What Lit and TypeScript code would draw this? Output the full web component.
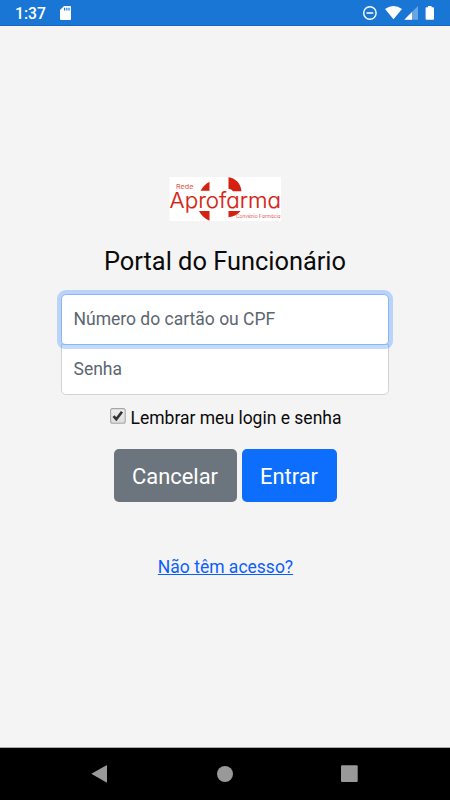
import { LitElement, html, css, svg } from "lit";
import { customElement } from "lit/decorators.js";

const logo = svg`
  <rect x=".5" width="111.500" height="44" fill="#fff"/>
  <g fill="#d5210f">
    <path d="M31.600 13.800Q34.500 8 40.500 4.700V13.800Z"/>
    <path d="M59.500 0.300C66.900 1.200 71.900 7 72.500 14.200H64Q62.700 12.200 59.500 11.800Z"/>
    <path d="M30 34H40.500V43.700Q33.500 40.800 30 34Z"/>
    <path d="M59.500 34H71.500Q67.500 39.600 59.500 40.200Z"/>
  </g>
  <g class="wordmark" fill="#d5210f">
    <text x="7" y="11.800" font-size="6.600" textLength="17.500" lengthAdjust="spacingAndGlyphs">Rede</text>
    <text x="0.600" y="31.200" font-size="22" textLength="111.400" lengthAdjust="spacingAndGlyphs" stroke="#d5210f" stroke-width=".2">Aprofarma</text>
    <text x="67" y="41.200" font-size="5.400" textLength="44.500" lengthAdjust="spacingAndGlyphs">Convênio Farmácia</text>
  </g>`;

@customElement("app-root")
export class AppRoot extends LitElement {
  static styles = css`
    :host {
      display: flex;
      flex-direction: column;
      width: 450px;
      height: 800px;
      box-sizing: border-box;
      overflow: hidden;
      background: #f4f4f4;
      color: #0a0a0a;
      font-family: Roboto, sans-serif;
    }
    * { box-sizing: border-box; }
    svg { display: block; }
    .status {
      height: 26px;
      flex: none;
      display: flex;
      align-items: center;
      justify-content: space-between;
      background: #1976d5;
      border-bottom: 1px solid #1267c5;
      color: #fff;
      padding-left: 15px;
    }
    .left { display: flex; align-items: center; gap: 14px; }
    .clock { font-size: 15.700px; font-weight: 500; line-height: 26px; padding-top: 2px; }
    main {
      flex: 1;
      display: flex;
      flex-direction: column;
      align-items: center;
      padding-top: 151px;
    }
    .logo { width: 112px; height: 44px; }
    .wordmark {
      font-family: Inter, Lato, sans-serif;
      font-weight: 300;
      font-feature-settings: "cv11" 1;
    }
    h1 {
      margin: 24px 0 0;
      font-size: 25.400px;
      line-height: 33px;
      font-weight: 400;
      white-space: nowrap;
    }
    .fields { width: 328px; margin-top: 16px; display: flex; flex-direction: column; }
    .field {
      display: block;
      width: 100%;
      height: 51px;
      margin: 0;
      padding: 0 11px 1px 11.500px;
      border: 1px solid #ced4da;
      border-radius: 0 0 5px 5px;
      background: #fff;
      font: 400 17.500px/24px Roboto, sans-serif;
      outline: none;
    }
    .field::placeholder { color: #5b6670; opacity: 1; }
    .field.active {
      position: relative;
      z-index: 1;
      margin-bottom: -1px;
      border-color: #86b7fe;
      border-radius: 5px 5px 4px 4px;
      box-shadow: 0 0 0 4px rgba(13, 110, 253, .25);
    }
    .remember {
      display: flex;
      align-items: center;
      gap: 5px;
      margin-top: 11px;
      padding-left: 1px;
      font-size: 17.500px;
      line-height: 24px;
      white-space: nowrap;
    }
    .actions { display: flex; gap: 5px; margin-top: 19px; }
    .btn {
      height: 53px;
      padding: 2px 0 0;
      border: 0;
      border-radius: 5px;
      color: #fff;
      font: 400 21.900px/51px Roboto, sans-serif;
    }
    .cancel { width: 123px; background: #6c757d; }
    .enter { width: 95px; background: #0d6efd; }
    .link {
      margin-top: 53px;
      padding-left: 1px;
      color: #0d5ffd;
      font-size: 17.500px;
      line-height: 24px;
      text-decoration: underline;
    }
    .nav { height: 53px; flex: none; background: #000; border-top: 1px solid #aaa; }
  `;

  render() {
    return html`
      <header class="status">
        <div class="left">
          <span class="clock">1:37</span>
          <svg width="11" height="14" viewBox="0 0 11 14">
            <path d="M4 0H10Q11 0 11 1V13Q11 14 10 14H1Q0 14 0 13V4Z" fill="#fff"/>
            <path d="M4 1.800h1.200v2.600H4zM6.200 1.800h1.200v2.600H6.200zM8.400 1.800h1.200v2.600H8.400z" fill="#1976d5"/>
          </svg>
        </div>
        <svg width="90" height="26" viewBox="360 0 90 26">
          <circle cx="369.900" cy="13" r="6.200" fill="none" stroke="#fff" stroke-width="1.400"/>
          <path d="M366.500 13h6.800" stroke="#fff" stroke-width="1.500"/>
          <path d="M385 9Q393.500 3.200 402 9L393.500 19.300Z" fill="#fff"/>
          <path d="M418 6V19.700H404.300Z" fill="#fff" opacity=".35"/>
          <path d="M412 12V19.700H404.300Z" fill="#fff"/>
          <path d="M428 6h3.600v1.300h1.500q.9 0 .9.900v10.600q0 .9-.9.900h-6.600q-.9 0-.9-.9V8.200q0-.9.900-.9H428z" fill="#fff"/>
        </svg>
      </header>
      <main>
        <svg class="logo" viewBox="0 0 112 44">${logo}</svg>
        <h1>Portal do Funcionário</h1>
        <div class="fields">
          <input class="field active" placeholder="Número do cartão ou CPF" />
          <input class="field" type="password" placeholder="Senha" />
        </div>
        <div class="remember">
          <svg width="16" height="24" viewBox="0 0 16 24">
            <defs>
              <linearGradient id="box" x2="0" y2="1">
                <stop stop-color="#eee"/><stop offset="1" stop-color="#ddd"/>
              </linearGradient>
            </defs>
            <rect x=".6" y="2.600" width="14.600" height="14.600" rx="2" fill="url(#box)" stroke="#a6a6a6" stroke-width="1.100"/>
            <path d="M3.500 10.200L6.300 13.200L12 5.800" fill="none" stroke="#333" stroke-width="2.700"/>
          </svg>
          <span>Lembrar meu login e senha</span>
        </div>
        <div class="actions">
          <button class="btn cancel">Cancelar</button>
          <button class="btn enter">Entrar</button>
        </div>
        <a class="link">Não têm acesso?</a>
      </main>
      <nav class="nav">
        <svg width="450" height="52" viewBox="0 748 450 52" fill="#999">
          <path d="M91.300 773.700L106.500 765.200Q107 765 107 765.500V782.300Q107 782.900 106.500 782.500Z"/>
          <circle cx="225" cy="774" r="8"/>
          <rect x="341" y="765.300" width="16.700" height="16.700" rx="1"/>
        </svg>
      </nav>
    `;
  }
}
